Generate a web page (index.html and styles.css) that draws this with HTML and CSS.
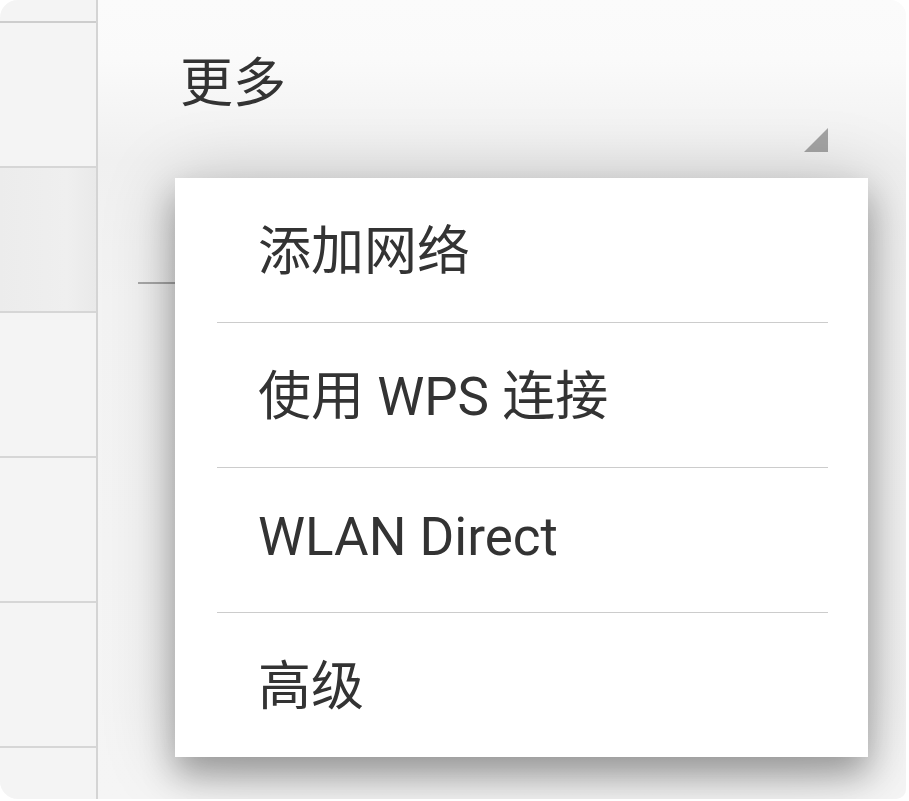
FILE: index.html
```html
<!DOCTYPE html>
<html lang="zh-CN">
<head>
<meta charset="utf-8">
<title>更多</title>
<link rel="stylesheet" href="styles.css">
</head>
<body>
<div class="screen">
  <aside class="sidebar">
    <div class="side-top"></div>
    <div class="side-row"></div>
    <div class="side-row active"></div>
    <div class="side-row"></div>
    <div class="side-row"></div>
    <div class="side-row"></div>
    <div class="side-row"></div>
  </aside>
  <main class="main">
    <div class="header">
      <div class="title">更多</div>
      <svg class="caret" width="24" height="24" viewBox="0 0 24 24"><polygon points="24,0 24,24 0,24" fill="#a3a3a3"/></svg>
    </div>
    <div class="field"></div>
    <ul class="popup">
      <li class="item">添加网络</li>
      <li class="divider"></li>
      <li class="item">使用 WPS 连接</li>
      <li class="divider"></li>
      <li class="item">WLAN Direct</li>
      <li class="divider"></li>
      <li class="item">高级</li>
    </ul>
  </main>
</div>
</body>
</html>
```
FILE: styles.css
```css
html, body {
  margin: 0;
  padding: 0;
  background: #ffffff;
}
body {
  font-family: Roboto, "Noto Sans CJK SC", sans-serif;
  color: #333333;
}
.screen {
  width: 906px;
  height: 799px;
  border-radius: 18px 16px 10px 18px;
  overflow: hidden;
  display: flex;
  background: #fafafa;
}
.sidebar {
  width: 96px;
  flex: none;
  background: #f4f4f4;
  border-right: 2px solid #d4d4d4;
  display: flex;
  flex-direction: column;
}
.side-top {
  height: 21px;
  flex: none;
  border-bottom: 2px solid #cdcdcd;
}
.side-row {
  height: 143px;
  flex: none;
  border-bottom: 2px solid #d6d6d6;
}
.side-row.active {
  background: linear-gradient(90deg, #ececec, #efefef 70%, #e9e9e9);
}
.main {
  flex: 1;
  position: relative;
  padding: 0 38px 0 40px;
  background: linear-gradient(180deg, #fbfbfb 0, #fafafa 60px, #f0f0f0 160px, #f3f3f3 300px, #f5f5f5 100%);
}
.header {
  height: 152px;
  display: flex;
  justify-content: space-between;
  align-items: flex-end;
  padding: 0 40px 0 42px;
}
.title {
  align-self: flex-start;
  margin-top: 58px;
  font-size: 53px;
  line-height: 53px;
  color: #333333;
}
.caret {
  display: block;
}
.field {
  height: 130px;
  border-bottom: 2px solid #a9a9a9;
}
.popup {
  position: absolute;
  left: 77px;
  top: 178px;
  width: 693px;
  margin: 0;
  padding: 0;
  list-style: none;
  background: #ffffff;
  box-shadow: 0 18px 32px rgba(0, 0, 0, 0.3), 0 4px 70px rgba(0, 0, 0, 0.2);
}
.item {
  height: 144px;
  box-sizing: border-box;
  padding: 0 0 6px 83px;
  display: flex;
  align-items: center;
  font-size: 53px;
  color: #333333;
  white-space: nowrap;
}
.divider {
  height: 1px;
  margin: 0 40px 0 42px;
  background: #cccccc;
}
```
